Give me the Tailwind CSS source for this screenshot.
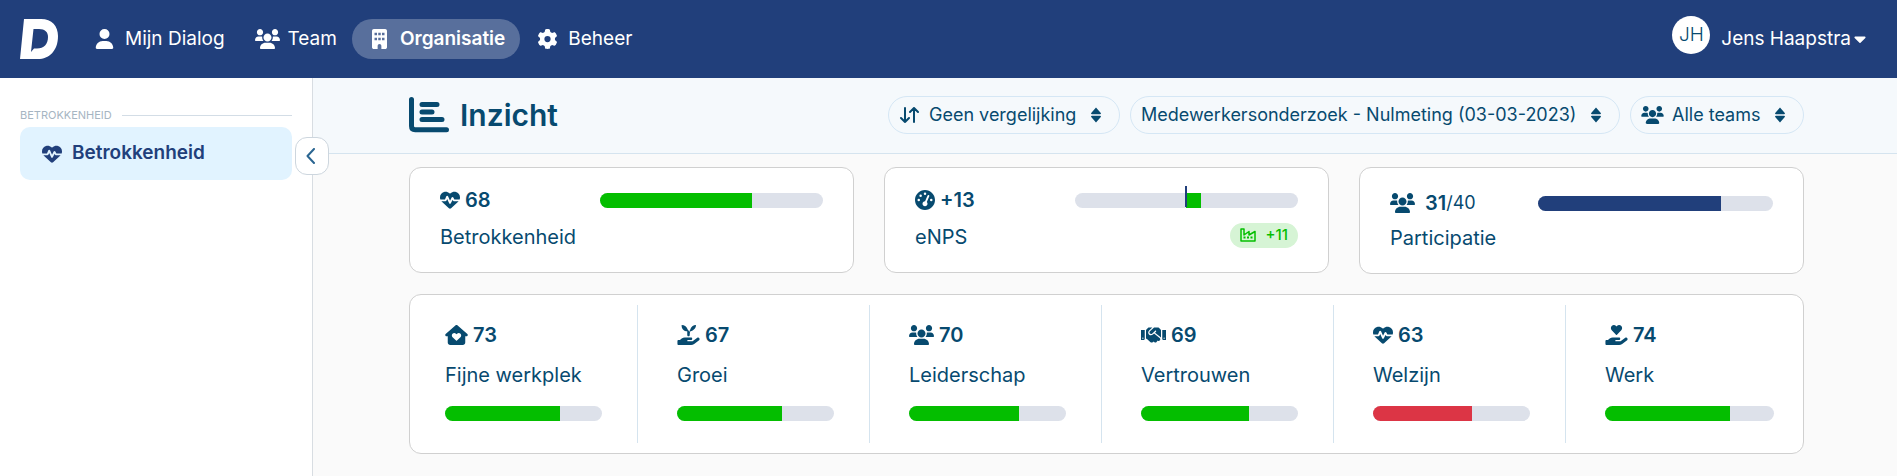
<!DOCTYPE html>
<html lang="nl">
<head>
    <meta charset="UTF-8">
    <meta name="viewport" content="width=device-width, initial-scale=1.0">
    <title>Inzicht</title>
    <script src="https://cdn.jsdelivr.net/npm/@tailwindcss/browser@4"></script>
</head>
<body class="flex min-h-screen flex-col bg-[#fafafa] font-['Inter',sans-serif] text-[#074a6f]">
    <!-- Icon sprite -->
    <svg class="hidden" aria-hidden="true">
        <symbol id="user" viewBox="0 0 448 512"><path d="M224 256A128 128 0 1 0 224 0a128 128 0 1 0 0 256zm-45.7 48C79.8 304 0 383.8 0 482.3C0 498.7 13.3 512 29.7 512H418.3c16.4 0 29.7-13.3 29.7-29.7C448 383.8 368.2 304 269.7 304H178.3z"/></symbol>
        <symbol id="users" viewBox="0 0 640 512"><path d="M319.9 320c57.41 0 103.1-46.56 103.1-104c0-57.44-46.54-104-103.1-104c-57.41 0-103.1 46.56-103.1 104C215.9 273.4 262.5 320 319.9 320zM369.9 352H270.1C191.6 352 128 411.7 128 485.3C128 500.1 140.7 512 156.4 512h327.2C499.3 512 512 500.1 512 485.3C512 411.7 448.4 352 369.9 352zM512 160c44.18 0 80-35.82 80-80S556.2 0 512 0c-44.18 0-80 35.82-80 80S467.8 160 512 160zM183.9 216c0-5.449 .9824-10.63 1.609-15.91C174.6 194.1 162.6 192 149.9 192H88.08C39.44 192 0 233.8 0 285.3C0 295.6 7.887 304 17.62 304h199.5C196.7 280.2 183.9 249.7 183.9 216zM128 160c44.18 0 80-35.82 80-80S172.2 0 128 0C83.82 0 48 35.82 48 80S83.82 160 128 160zM551.9 192h-61.84c-12.8 0-24.88 3.037-35.86 8.24C454.8 205.5 455.8 210.6 455.8 216c0 33.71-12.78 64.21-33.16 88h199.7C632.1 304 640 295.6 640 285.3C640 233.8 600.6 192 551.9 192z"/></symbol>
        <symbol id="building" viewBox="0 0 384 512"><path fill-rule="evenodd" d="M48 0H336C362.5 0 384 21.5 384 48V464C384 490.5 362.5 512 336 512H240V432C240 405.5 218.5 384 192 384S144 405.5 144 432V512H48C21.5 512 0 490.5 0 464V48C0 21.5 21.5 0 48 0zM64 96h64v64H64zM160 96h64v64h-64zM256 96h64v64h-64zM64 224h64v64H64zM160 224h64v64h-64zM256 224h64v64h-64z"/></symbol>
        <symbol id="gear" viewBox="0 0 512 512"><path d="M495.9 166.6c3.2 8.7 .5 18.4-6.4 24.6l-43.3 39.4c1.1 8.3 1.7 16.8 1.7 25.4s-.6 17.1-1.7 25.4l43.3 39.4c6.9 6.2 9.6 15.9 6.4 24.6c-4.4 11.9-9.7 23.3-15.8 34.3l-4.7 8.1c-6.6 11-14 21.4-22.1 31.2c-5.9 7.2-15.7 9.6-24.5 6.8l-55.7-17.7c-13.4 10.3-28.2 18.9-44 25.4l-12.5 57.1c-2 9.1-9 16.3-18.2 17.8c-13.8 2.3-28 3.5-42.5 3.5s-28.7-1.2-42.5-3.5c-9.2-1.5-16.2-8.7-18.2-17.8l-12.5-57.1c-15.8-6.5-30.6-15.1-44-25.4L83.1 425.9c-8.8 2.8-18.6 .3-24.5-6.8c-8.1-9.8-15.5-20.2-22.1-31.2l-4.7-8.1c-6.1-11-11.4-22.4-15.8-34.3c-3.2-8.7-.5-18.4 6.4-24.6l43.3-39.4C64.6 273.1 64 264.6 64 256s.6-17.1 1.7-25.4L22.4 191.2c-6.9-6.2-9.6-15.9-6.4-24.6c4.4-11.9 9.7-23.3 15.8-34.3l4.7-8.1c6.6-11 14-21.4 22.1-31.2c5.9-7.2 15.7-9.6 24.5-6.8l55.7 17.7c13.4-10.3 28.2-18.9 44-25.4l12.5-57.1c2-9.1 9-16.3 18.2-17.8C227.3 1.2 241.5 0 256 0s28.7 1.2 42.5 3.5c9.2 1.5 16.2 8.7 18.2 17.8l12.5 57.1c15.8 6.5 30.6 15.1 44 25.4l55.7-17.7c8.8-2.8 18.6-.3 24.5 6.8c8.1 9.8 15.5 20.2 22.1 31.2l4.7 8.1c6.1 11 11.4 22.4 15.8 34.3zM256 336a80 80 0 1 0 0-160 80 80 0 1 0 0 160z"/></symbol>
        <symbol id="heart-pulse" viewBox="0 0 512 512"><path d="M228.3 469.1L47.6 300.4c-4.2-3.9-8.2-8.1-11.9-12.4h87c22.6 0 43-13.6 51.7-34.5l10.5-25.2 49.3 109.5c3.8 8.5 12.1 14 21.4 14.1s17.8-5 22-13.3L320 253.7l1.7 3.4c9.5 19 28.9 31 50.1 31H476.3c-3.7 4.3-7.7 8.5-11.9 12.4L283.7 469.1c-7.5 7-17.4 10.9-27.7 10.9s-20.2-3.9-27.7-10.9zM503.7 240h-132c-3 0-5.8-1.7-7.2-4.4l-23.2-46.3c-4.1-8.1-12.4-13.3-21.5-13.3s-17.4 5.1-21.5 13.3l-41.4 82.8L205.9 158.2c-3.9-8.7-12.7-14.3-22.2-14.1s-18.1 5.9-21.8 14.8l-31.8 76.3c-1.2 3-4.2 4.9-7.4 4.9H16c-2.6 0-5 .4-7.3 1.1C3 225.2 0 208.2 0 190.9v-5.8c0-69.9 50.5-129.5 119.4-141C165 36.5 211.4 51.4 244 84l12 12 12-12c32.6-32.6 79-47.5 124.6-39.9C461.5 55.6 512 115.2 512 185.1v5.8c0 16.9-2.8 33.5-8.3 49.1z"/></symbol>
        <symbol id="gauge" viewBox="0 0 512 512"><path fill-rule="evenodd" d="M512 256c0 141.4-114.6 256-256 256S0 397.4 0 256 114.6 0 256 0s256 114.6 256 256zM288 96a32 32 0 1 0-64 0 32 32 0 1 0 64 0zM256 416c35.3 0 64-28.7 64-64c0-17.4-6.9-33.1-18.1-44.6L366 161.7c5.3-12.1-.2-26.3-12.3-31.6s-26.3 .2-31.6 12.3L257.9 288c-.6 0-1.3 0-1.9 0c-35.3 0-64 28.7-64 64s28.7 64 64 64zM176 144a32 32 0 1 0-64 0 32 32 0 1 0 64 0zM96 288a32 32 0 1 0 0-64 32 32 0 1 0 0 64zm352-32a32 32 0 1 0-64 0 32 32 0 1 0 64 0z"/></symbol>
        <symbol id="house-heart" viewBox="0 0 576 512"><path fill-rule="evenodd" d="M266 8c12-11 32-11 44 0l256 224c22 20 8 56-22 56h-32v160c0 35-29 64-64 64H128c-35 0-64-29-64-64V288H32c-30 0-44-36-22-56zM288 236l-14-14c-24-24-64-24-88 0-24 26-23 66 2 90l88 86c7 7 17 7 24 0l88-86c25-24 26-64 2-90-24-24-64-24-88 0z"/></symbol>
        <symbol id="hand" viewBox="0 0 576 512"><path d="M559.7 392.2c17.8-13.1 21.6-38.1 8.5-55.9s-38.1-21.6-55.9-8.5L392.6 416H272c-8.8 0-16-7.2-16-16s7.2-16 16-16h16 64c17.7 0 32-14.3 32-32s-14.3-32-32-32H288 272 193.7c-29.1 0-57.3 9.9-80 28L68.8 384H32c-17.7 0-32 14.3-32 32v64c0 17.7 14.3 32 32 32H192 352.5c29 0 57.3-9.3 80.7-26.5l126.6-93.3z"/></symbol>
        <symbol id="hand-heart" viewBox="0 0 576 512"><use href="#hand"/><path d="M275.2 250.5c7 7.4 18.4 7.4 25.5 0l108.9-114.2c31.6-33.2 29.8-88.2-5.6-118.8-30.8-26.7-76.7-21.9-104.9 7.7L288 36.9l-11.1-11.6C248.7-4.4 202.8-9.2 172 17.5c-35.3 30.6-37.2 85.6-5.6 118.8l108.9 114.2z"/></symbol>
        <symbol id="hand-seedling" viewBox="0 0 576 512"><use href="#hand"/><path d="M112 0c76 0 138 48 155 116 22 20 35 42 42 62 4-22 12-42 22-58C352 46 408 0 480 0c0 82-58 146-144 159-10 20-16 43-16 70v27c0 18-14 32-32 32s-32-14-32-32v-96C176 160 112 96 112 16z"/></symbol>
        <symbol id="handshake" viewBox="0 0 640 512"><path d="M434.7 64h-85.9c-8 0-15.7 3-21.6 8.4l-98.3 90c-.1.1-.2.3-.3.4-16.6 15.6-16.3 40.5-2.1 56 12.7 13.9 39.4 17.6 56.1 2.7.1-.1.3-.1.4-.2l79.9-73.2c6.5-5.9 16.7-5.5 22.6 1 6 6.5 5.5 16.6-1 22.6l-26.1 23.9L504 313.8c2.9 2.4 5.5 5 7.9 7.7V128l-54.6-54.6c-5.9-6-14.1-9.4-22.6-9.4zM544 128.2v223.9c0 17.7 14.3 32 32 32h64V128.2h-96zm48 223.9c-8.8 0-16-7.2-16-16s7.2-16 16-16 16 7.2 16 16-7.2 16-16 16zM0 384h64c17.7 0 32-14.3 32-32V128.2H0V384zm48-63.9c8.8 0 16 7.2 16 16s-7.2 16-16 16-16-7.2-16-16c0-8.9 7.2-16 16-16zm435.9 18.6L334.6 217.5l-30 27.5c-29.7 27.1-75.2 24.5-101.7-4.4-26.9-29.4-24.8-74.9 4.4-101.7L289.1 64h-83.8c-8.5 0-16.6 3.4-22.6 9.4L128 128v223.9h18.3l90.5 81.9c27.4 22.3 67.7 18.1 90-9.3l.2-.2 17.9 15.5c15.9 13 39.4 10.5 52.3-5.4l31.4-38.6 5.4 4.4c13.7 11.1 33.9 9.1 45-4.7l9.5-11.7c11.2-13.8 9.1-33.9-4.6-45.1z"/></symbol>
        <symbol id="sort" viewBox="0 0 10 16"><path d="M5 .5 9.8 6Q10.3 7.300 9 7.300H1Q-.3 7.300.2 6ZM5 15.500 9.800 10Q10.300 8.700 9 8.700H1Q-.3 8.700.2 10Z"/></symbol>
    </svg>

    <header class="flex h-[78px] items-center bg-[#213f7b] pr-[31px] pl-5 text-[19px] text-white">
        <a href="#" aria-label="Dialog" class="mr-[19px]">
            <svg class="h-10 w-[38px] fill-current" viewBox="0 0 38 40"><path fill-rule="evenodd" d="M4 0H21C32 0 38 7 38 17C38 32 29 40 18 40H0ZM13.500 10 11 33 14 29.500H17C24 29.500 28 25 28 18C28 13 25 10 19 10Z"/></svg>
        </a>
        <nav class="flex">
            <a href="#" class="flex h-10 items-center gap-2 rounded-full px-[15px]"><svg class="h-5 w-[25px] fill-current"><use href="#user"/></svg>Mijn Dialog</a>
            <a href="#" class="flex h-10 items-center gap-2 rounded-full px-[15px]"><svg class="h-5 w-[25px] fill-current"><use href="#users"/></svg>Team</a>
            <a href="#" class="flex h-10 items-center gap-2 rounded-full bg-white/25 px-[15px] font-semibold"><svg class="h-5 w-[25px] fill-current"><use href="#building"/></svg>Organisatie</a>
            <a href="#" class="flex h-10 items-center gap-2 rounded-full px-[15px]"><svg class="h-5 w-[25px] fill-current"><use href="#gear"/></svg>Beheer</a>
        </nav>
        <button type="button" class="ml-auto flex items-center">
            <span class="mr-[11px] mb-2 flex size-[38px] items-center justify-center rounded-full bg-white font-light text-[#074a6f]">JH</span>
            Jens Haapstra
            <svg class="ml-[3px] h-5 w-3 fill-current" viewBox="0 0 320 512"><path d="M31.3 192h257.3c17.8 0 26.7 21.5 14.1 34.1L174.1 354.8c-7.8 7.8-20.5 7.8-28.3 0L17.2 226.1C4.6 213.5 13.5 192 31.3 192z"/></svg>
        </button>
    </header>

    <div class="flex flex-1">
        <aside class="relative w-[313px] shrink-0 border-r border-[#d8dde2] bg-white px-5 pt-[29px]">
            <div class="mb-1 flex items-center gap-[10px] text-[11px] leading-4 text-[#a6b5c2]">
                BETROKKENHEID
                <span class="h-px flex-1 bg-[#d3dde6]"></span>
            </div>
            <a href="#" class="flex h-[53px] items-center gap-[10px] rounded-[10px] bg-[#e1f3ff] px-[22px] text-[19px] font-semibold text-[#213f7b]">
                <svg class="size-5 fill-current"><use href="#heart-pulse"/></svg>
                Betrokkenheid
            </a>
            <button type="button" aria-label="Menu inklappen" class="absolute top-[59px] -right-[17px] flex h-[38px] w-[34px] items-center justify-center rounded-xl border border-[#cdd6de] bg-white pr-[2px]">
                <svg class="h-4 w-[10px] fill-none stroke-[#2a6591] stroke-2" viewBox="0 0 10 16"><path stroke-linecap="round" stroke-linejoin="round" d="M8 1 1.500 8 8 15"/></svg>
            </button>
        </aside>

        <main class="min-w-0 flex-1">
            <div class="flex h-[76px] items-center border-b border-[#d5e4ef] bg-[#f5f9fc] pr-[93px] pb-[2px] pl-24">
                <svg class="mr-[11px] h-9 w-10 fill-none stroke-current stroke-5" viewBox="0 0 40 36"><path stroke-linecap="round" stroke-linejoin="round" d="M2.500 2.500V29Q2.500 32.700 6.200 32.700H37.500M13 7.500H28M13 15H23M13 22.500H33"/></svg>
                <h1 class="text-[30px] leading-9 font-semibold">Inzicht</h1>
                <div class="ml-auto flex gap-[10px] text-lg">
                    <div class="flex h-[38px] items-center rounded-full border border-[#d5e7f5] pr-[18px] pl-[10px]">
                        <svg class="mr-[10px] h-4 w-5 fill-none stroke-current stroke-2" viewBox="0 0 20 16"><path stroke-linecap="round" stroke-linejoin="round" d="M6 1V15M2 11l4 4 4-4M15 15V1M11 5l4-4 4 4"/></svg>
                        <select aria-label="Vergelijking" class="mr-[14px] appearance-none"><option>Geen vergelijking</option></select>
                        <svg class="h-4 w-[10px] fill-current"><use href="#sort"/></svg>
                    </div>
                    <div class="flex h-[38px] items-center rounded-full border border-[#d5e7f5] pr-[18px] pl-[10px]">
                        <select aria-label="Onderzoek" class="mr-[14px] appearance-none"><option>Medewerkersonderzoek - Nulmeting (03-03-2023)</option></select>
                        <svg class="h-4 w-[10px] fill-current"><use href="#sort"/></svg>
                    </div>
                    <div class="flex h-[38px] items-center rounded-full border border-[#d5e7f5] pr-[18px] pl-[10px]">
                        <svg class="mr-2 h-[18px] w-[23px] fill-current"><use href="#users"/></svg>
                        <select aria-label="Teams" class="mr-[14px] appearance-none"><option>Alle teams</option></select>
                        <svg class="h-4 w-[10px] fill-current"><use href="#sort"/></svg>
                    </div>
                </div>
            </div>

            <div class="space-y-5 pt-[13px] pr-[93px] pb-5 pl-24 text-xl leading-[30px]">
                <div class="grid grid-cols-3 items-start gap-[30px]">
                    <section class="rounded-xl border border-[#d0d0d0] bg-white px-[30px] pt-[17px] pb-5">
                        <div class="mb-[7px] flex items-center">
                            <div class="flex w-5/12 items-center gap-[5px] font-semibold"><svg class="size-5 fill-current"><use href="#heart-pulse"/></svg>68</div>
                            <div class="h-[15px] flex-1 overflow-hidden rounded-full bg-[#dde1ea]"><div class="h-full bg-[#04be00]" style="width: 68%"></div></div>
                        </div>
                        <h2>Betrokkenheid</h2>
                    </section>
                    <section class="rounded-xl border border-[#d0d0d0] bg-white px-[30px] pt-[17px] pb-5">
                        <div class="mb-[7px] flex items-center">
                            <div class="flex w-5/12 items-center gap-[5px] font-semibold"><svg class="size-5 fill-current"><use href="#gauge"/></svg>+13</div>
                            <div class="relative h-[15px] flex-1 rounded-full bg-[#dde1ea]">
                                <div class="ml-[50%] h-full bg-[#04be00]" style="width: 6.5%"></div>
                                <span class="absolute -top-[7px] left-1/2 -ml-px h-[21px] w-[2px] bg-[#213f7b]"></span>
                            </div>
                        </div>
                        <div class="flex items-center justify-between">
                            <h2>eNPS</h2>
                            <span class="mb-1 flex h-[25px] items-center gap-[10px] rounded-full bg-[#d6f4d5] px-[10px] text-[15px] font-medium text-[#04be00]">
                                <svg class="h-4 w-4 fill-none stroke-current stroke-[1.5px]" viewBox="0 0 16 16"><path stroke-linejoin="round" d="M1 2H4V8L9 4.500V8L15 4.500V14H1Z"/><path stroke-width="2" d="M3.500 10.500h2M7 10.500h2M10.500 10.500h2"/></svg>
                                +11
                            </span>
                        </div>
                    </section>
                    <section class="rounded-xl border border-[#d0d0d0] bg-white px-[30px] pt-5 pb-5">
                        <div class="mb-[5px] flex items-center">
                            <div class="flex w-[148px] items-center"><svg class="mr-[10px] h-5 w-[25px] fill-current"><use href="#users"/></svg><b class="font-semibold">31</b><span class="text-lg">/40</span></div>
                            <div class="h-[15px] flex-1 overflow-hidden rounded-full bg-[#dde1ea]"><div class="h-full bg-[#213f7b]" style="width: 78%"></div></div>
                        </div>
                        <h2>Participatie</h2>
                    </section>
                </div>

                <section class="rounded-xl border border-[#d0d0d0] bg-white py-[10px]">
                    <div class="mr-[5px] -ml-1 grid grid-cols-6">
                        <div class="border-r border-[#d5e4ef] pt-[15px] pr-[35px] pb-[22px] pl-[39px]">
                            <div class="mb-[10px] flex items-center gap-[5px] font-semibold"><svg class="h-5 w-[23px] fill-current"><use href="#house-heart"/></svg>73</div>
                            <h3 class="mb-4">Fijne werkplek</h3>
                            <div class="h-[15px] overflow-hidden rounded-full bg-[#dde1ea]"><div class="h-full bg-[#04be00]" style="width: 73%"></div></div>
                        </div>
                        <div class="border-r border-[#d5e4ef] pt-[15px] pr-[35px] pb-[22px] pl-[39px]">
                            <div class="mb-[10px] flex items-center gap-[5px] font-semibold"><svg class="h-5 w-[23px] fill-current"><use href="#hand-seedling"/></svg>67</div>
                            <h3 class="mb-4">Groei</h3>
                            <div class="h-[15px] overflow-hidden rounded-full bg-[#dde1ea]"><div class="h-full bg-[#04be00]" style="width: 67%"></div></div>
                        </div>
                        <div class="border-r border-[#d5e4ef] pt-[15px] pr-[35px] pb-[22px] pl-[39px]">
                            <div class="mb-[10px] flex items-center gap-[5px] font-semibold"><svg class="h-5 w-[25px] fill-current"><use href="#users"/></svg>70</div>
                            <h3 class="mb-4">Leiderschap</h3>
                            <div class="h-[15px] overflow-hidden rounded-full bg-[#dde1ea]"><div class="h-full bg-[#04be00]" style="width: 70%"></div></div>
                        </div>
                        <div class="border-r border-[#d5e4ef] pt-[15px] pr-[35px] pb-[22px] pl-[39px]">
                            <div class="mb-[10px] flex items-center gap-[5px] font-semibold"><svg class="h-5 w-[25px] fill-current"><use href="#handshake"/></svg>69</div>
                            <h3 class="mb-4">Vertrouwen</h3>
                            <div class="h-[15px] overflow-hidden rounded-full bg-[#dde1ea]"><div class="h-full bg-[#04be00]" style="width: 69%"></div></div>
                        </div>
                        <div class="border-r border-[#d5e4ef] pt-[15px] pr-[35px] pb-[22px] pl-[39px]">
                            <div class="mb-[10px] flex items-center gap-[5px] font-semibold"><svg class="size-5 fill-current"><use href="#heart-pulse"/></svg>63</div>
                            <h3 class="mb-4">Welzijn</h3>
                            <div class="h-[15px] overflow-hidden rounded-full bg-[#dde1ea]"><div class="h-full bg-[#dc3545]" style="width: 63%"></div></div>
                        </div>
                        <div class="pt-[15px] pr-6 pb-[22px] pl-[39px]">
                            <div class="mb-[10px] flex items-center gap-[5px] font-semibold"><svg class="h-5 w-[23px] fill-current"><use href="#hand-heart"/></svg>74</div>
                            <h3 class="mb-4">Werk</h3>
                            <div class="h-[15px] overflow-hidden rounded-full bg-[#dde1ea]"><div class="h-full bg-[#04be00]" style="width: 74%"></div></div>
                        </div>
                    </div>
                </section>
            </div>
        </main>
    </div>
</body>
</html>
